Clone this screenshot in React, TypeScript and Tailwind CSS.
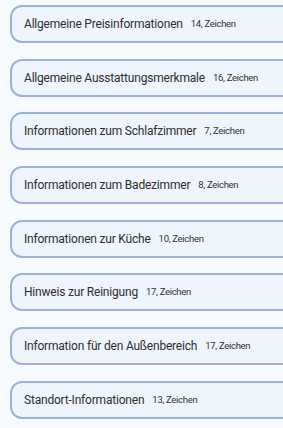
const items = [
  { title: 'Allgemeine Preisinformationen', count: 14 },
  { title: 'Allgemeine Ausstattungsmerkmale', count: 16 },
  { title: 'Informationen zum Schlafzimmer', count: 7 },
  { title: 'Informationen zum Badezimmer', count: 8 },
  { title: 'Informationen zur Küche', count: 10 },
  { title: 'Hinweis zur Reinigung', count: 17 },
  { title: 'Information für den Außenbereich', count: 17 },
  { title: 'Standort-Informationen', count: 13 },
];

export default function App() {
  return (
    <div className="w-[283px] h-[428px] overflow-hidden bg-[#f8fbfe] font-['Roboto',sans-serif]">
      <div className="flex flex-col gap-[15.7px] pt-[5px] pl-[10px]">
        {items.map((item) => (
          <div
            key={item.title}
            className="w-[300px] h-[38px] shrink-0 flex items-center pl-[12px] rounded-[12px] border-2 border-[#9ab1e0] bg-[#eef5fd]"
          >
            <span className="text-[12px] tracking-[-0.2px] text-[#2e2e2e] whitespace-nowrap">{item.title}</span>
            <span className="ml-[8px] text-[9.5px] tracking-[-0.3px] text-[#333] whitespace-nowrap">{item.count}, Zeichen</span>
          </div>
        ))}
      </div>
    </div>
  );
}
